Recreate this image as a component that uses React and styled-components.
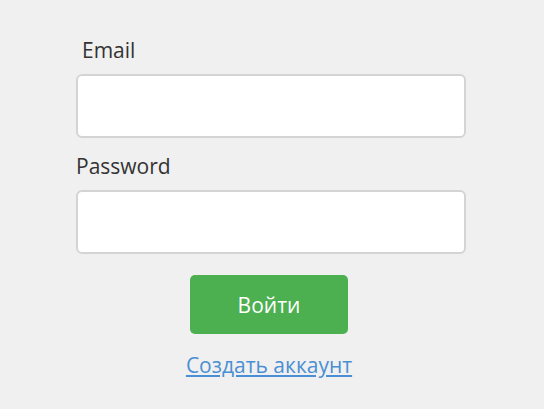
import React from "react";
import styled, { createGlobalStyle } from "styled-components";

const Global = createGlobalStyle`
  html, body { margin: 0; padding: 0; background: #f0f0f0; }
  body { font-family: "Open Sans", "Noto Sans", sans-serif; }
`;

const Form = styled.form`
  width: 390px;
  margin-left: 76px;
  padding-top: 34px;
  display: flex;
  flex-direction: column;
`;

const Label = styled.label`
  font-size: 21px;
  line-height: 28px;
  color: #333;
  padding-top: 2px;
  padding-left: ${(p) => p.$indent || 0}px;
  margin-bottom: 10px;
`;

const Input = styled.input`
  box-sizing: border-box;
  width: 390px;
  height: 64px;
  border: 2px solid #d4d4d4;
  border-radius: 6px;
  background: #fff;
  margin-bottom: 12px;
  outline: none;
`;

const Actions = styled.div`
  display: flex;
  flex-direction: column;
  align-items: center;
  gap: 17px;
  margin-top: 9px;
  padding-right: 4px;
`;

const Button = styled.button`
  width: 158px;
  height: 59px;
  border: none;
  border-radius: 5px;
  background: #4caf50;
  color: #fff;
  font-family: inherit;
  font-size: 21px;
`;

const Link = styled.a`
  font-size: 21px;
  color: #4a8fd3;
  text-decoration: underline;
`;

export default function App() {
  return (
    <>
      <Global />
      <Form onSubmit={(e) => e.preventDefault()}>
        <Label $indent={6}>Email</Label>
        <Input type="email" />
        <Label>Password</Label>
        <Input type="password" />
        <Actions>
          <Button type="submit">Войти</Button>
          <Link href="#">Создать аккаунт</Link>
        </Actions>
      </Form>
    </>
  );
}
